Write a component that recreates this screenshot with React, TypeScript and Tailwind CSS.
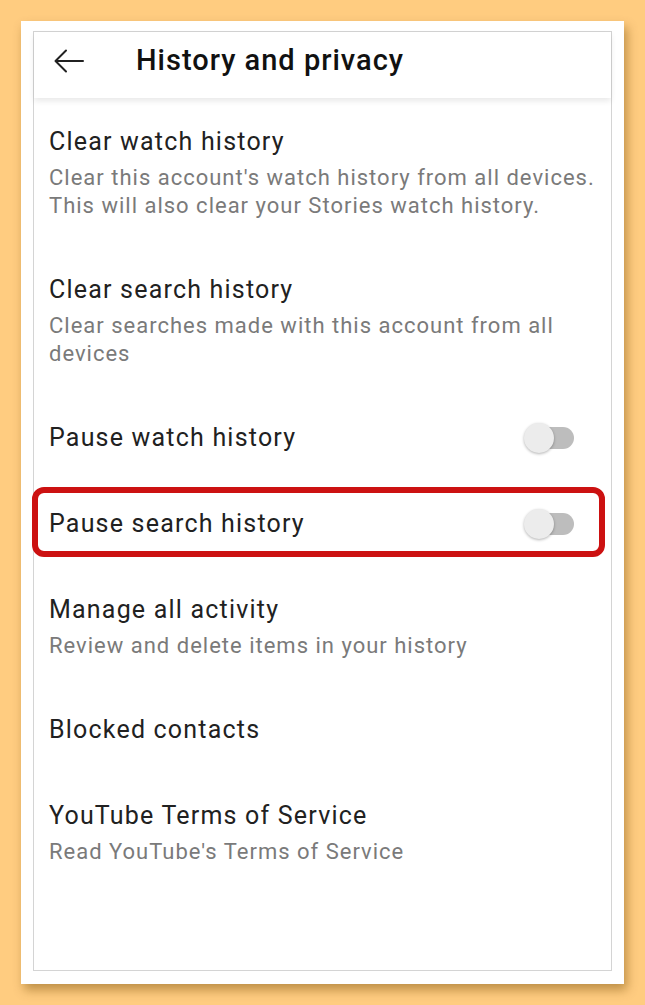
import React from 'react';

type Item = {
  title: string;
  sub?: string[];
  toggle?: boolean;
  highlight?: boolean;
};

const items: Item[] = [
  {
    title: 'Clear watch history',
    sub: ["Clear this account's watch history from all devices.", 'This will also clear your Stories watch history.'],
  },
  { title: 'Clear search history', sub: ['Clear searches made with this account from all', 'devices'] },
  { title: 'Pause watch history', toggle: true },
  { title: 'Pause search history', toggle: true, highlight: true },
  { title: 'Manage all activity', sub: ['Review and delete items in your history'] },
  { title: 'Blocked contacts' },
  { title: 'YouTube Terms of Service', sub: ["Read YouTube's Terms of Service"] },
];

const Toggle = () => (
  <div className="relative w-[50px] h-[32px] flex items-center">
    {/* track */}
    <div className="absolute left-[8px] right-0 h-[22px] rounded-full bg-[#bdbdbd]" />
    {/* thumb */}
    <div className="absolute left-0 w-[30px] h-[30px] rounded-full bg-[#ececec] shadow-[0_1px_3px_rgba(0,0,0,0.3)]" />
  </div>
);

const BackArrow = () => (
  <svg width="30" height="24" viewBox="0 0 30 24" fill="none" stroke="#212121" strokeWidth="2" strokeLinecap="round" strokeLinejoin="round">
    <path d="M29 12H2" />
    <path d="M12 1.5L1.5 12 12 22.5" />
  </svg>
);

export default function App() {
  return (
    <div className="w-[645px] h-[1005px] bg-[#ffcc80] pt-[21px] pl-[21px]" style={{ fontFamily: 'Roboto, "Noto Sans", sans-serif' }}>
      {/* photo card */}
      <div className="w-[603px] h-[963px] bg-white pt-[10px] pl-[12px] pr-[12px] pb-[13px] shadow-[3px_6px_10px_rgba(110,70,0,0.45)]">
        {/* phone screen */}
        <div className="h-full border border-[#d4d4d4] bg-white flex flex-col">
          {/* app bar */}
          <div className="relative z-10 h-[66px] pb-[9px] flex items-center bg-white shadow-[0_3px_6px_rgba(0,0,0,0.09)]">
            <div className="ml-[20px] w-[30px] flex items-center">
              <BackArrow />
            </div>
            <h1 className="ml-[52px] text-[29px] font-medium text-[#111111] tracking-[1px]">History and privacy</h1>
          </div>

          {/* settings list */}
          <div className="mt-[1px] flex flex-col">
            {items.map((item) => (
              <div
                key={item.title}
                className={`relative flex items-center pl-[15px] pr-[37px] pt-[26px] ${item.sub ? 'pb-[27px]' : 'pb-[26px]'}`}
              >
                <div className="flex-1 flex flex-col">
                  <div className="text-[25px] leading-[34px] text-[#212121] tracking-[1.2px]">{item.title}</div>
                  {item.sub && (
                    <div className="mt-[5px] flex flex-col">
                      {item.sub.map((line) => (
                        <div key={line} className="text-[22px] leading-[28px] text-[#7a7a7a] tracking-[1px] whitespace-nowrap">
                          {line}
                        </div>
                      ))}
                    </div>
                  )}
                </div>
                {item.toggle && <Toggle />}
                {item.highlight && (
                  <div className="absolute left-[-2px] right-[6px] top-[6px] bottom-[10px] border-[6px] border-[#cc1111] rounded-[12px] pointer-events-none" />
                )}
              </div>
            ))}
          </div>
        </div>
      </div>
    </div>
  );
}
